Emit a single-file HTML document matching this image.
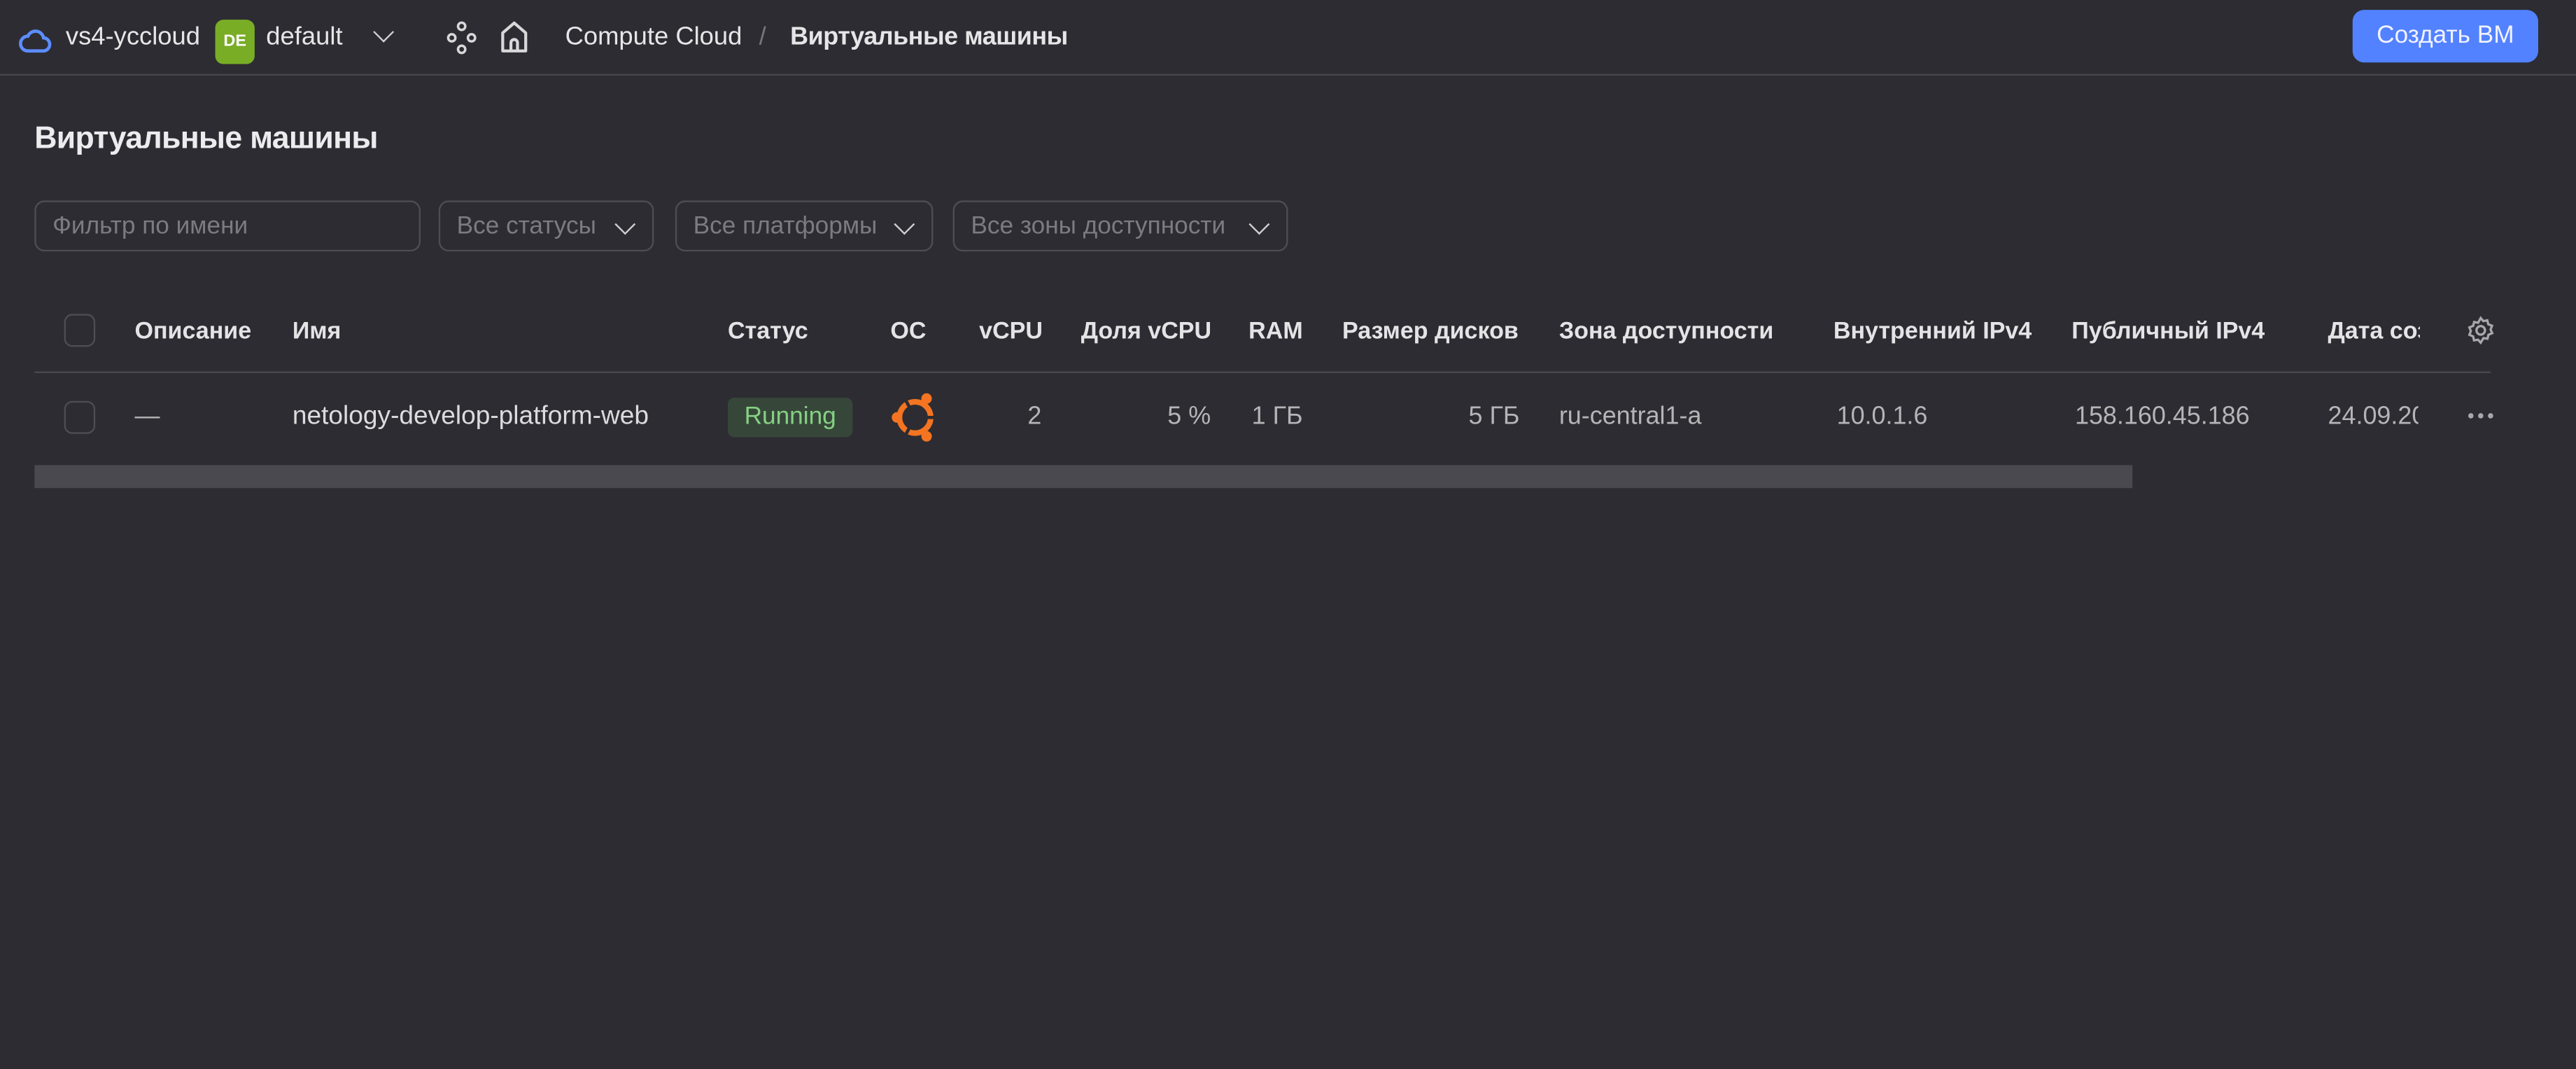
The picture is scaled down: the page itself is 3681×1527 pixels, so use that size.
<!DOCTYPE html>
<html><head><meta charset="utf-8"><style>
html,body{margin:0;padding:0;background:#2d2c32;width:3681px;height:1527px;overflow:hidden}
#w{position:absolute;left:0;top:0;width:1568px;height:650.5px;transform:scale(2.34758);transform-origin:0 0;font-family:"Liberation Sans","DejaVu Sans",sans-serif;color:#e6e6e8}
.a{position:absolute;white-space:nowrap}
.h{font-size:14.5px;font-weight:bold;color:#e4e4e6;top:194px}
.c{font-size:15.3px;color:#b5b5b8;top:245px}
.r{text-align:right}
.f{position:absolute;top:122px;height:31px;border:1px solid #4e4d54;border-radius:6px;box-sizing:border-box;font-size:15px;color:#7c7b82;line-height:30px;padding-left:10px}
.chev{position:absolute;top:9px;width:8px;height:8px;border-right:1.6px solid #d0d0d2;border-bottom:1.6px solid #d0d0d2;transform:rotate(45deg)}
.cb{position:absolute;width:19px;height:20px;border:1.5px solid #4e4d54;border-radius:5px;box-sizing:border-box}
</style></head><body><div id="w">
<svg class="a" style="left:11px;top:14px" width="21" height="20" viewBox="0 0 21 20"><path d="M6 17h9a4 4 0 0 0 .5-8 5 5 0 0 0-9.5-1 4.5 4.5 0 0 0 0 9z" fill="none" stroke="#5c8dff" stroke-width="2"/></svg>
<div class="a" style="left:40px;top:14px;font-size:15.5px">vs4-yccloud</div>
<div class="a" style="left:131px;top:12px;width:24px;height:27px;background:#79ad26;border-radius:5px;font-size:10px;font-weight:bold;color:#fff;text-align:center;line-height:27px">DE</div>
<div class="a" style="left:162px;top:14px;font-size:15.5px">default</div>
<div class="chev" style="left:229px;top:15px"></div>
<svg class="a" style="left:270px;top:12px" width="22" height="22" viewBox="0 0 22 22" fill="none" stroke="#d8d8da" stroke-width="1.5"><circle cx="11" cy="4" r="2.2"/><circle cx="5" cy="11" r="2.2"/><circle cx="17" cy="11" r="2.2"/><circle cx="11" cy="18" r="2.2"/></svg>
<svg class="a" style="left:303px;top:11px" width="20" height="22" viewBox="0 0 20 22" fill="none" stroke="#d8d8da" stroke-width="1.8"><path d="M3 20V9l7-6 7 6v11z" stroke-linejoin="round"/><path d="M8 20v-5a2 2 0 0 1 4 0v5"/></svg>
<div class="a" style="left:344px;top:14px;font-size:15.5px">Compute Cloud</div>
<div class="a" style="left:462px;top:14px;font-size:15.5px;color:#77767c">/</div>
<div class="a" style="left:481px;top:14px;font-size:15.3px;font-weight:bold;letter-spacing:-0.2px">Виртуальные машины</div>
<div class="a" style="left:1432px;top:6px;width:113px;height:32px;background:#5282ff;border-radius:7px;color:#f2f2ff;font-size:15px;text-align:center;line-height:32px">Создать ВМ</div>
<div class="a" style="left:0;top:45px;width:1568px;height:1.3px;background:#47464c"></div>
<div class="a" style="left:21px;top:74px;font-size:19px;font-weight:bold;color:#ececee;letter-spacing:-0.3px">Виртуальные машины</div>
<div class="f" style="left:21px;width:235px">Фильтр по имени</div>
<div class="f" style="left:267px;width:131px">Все статусы<div class="chev" style="left:108px"></div></div>
<div class="f" style="left:411px;width:157px">Все платформы<div class="chev" style="left:134px"></div></div>
<div class="f" style="left:580px;width:204px">Все зоны доступности<div class="chev" style="left:181px"></div></div>
<div class="cb" style="left:39px;top:191px"></div>
<div class="a h" style="left:82px">Описание</div>
<div class="a h" style="left:178px">Имя</div>
<div class="a h" style="left:443px">Статус</div>
<div class="a h" style="left:542px">ОС</div>
<div class="a h" style="left:596px">vCPU</div>
<div class="a h" style="left:658px">Доля vCPU</div>
<div class="a h" style="left:760px">RAM</div>
<div class="a h" style="left:817px">Размер дисков</div>
<div class="a h" style="left:949px">Зона доступности</div>
<div class="a h" style="left:1116px">Внутренний IPv4</div>
<div class="a h" style="left:1261px">Публичный IPv4</div>
<div class="a h" style="left:1417px;width:56px;overflow:hidden">Дата создания</div>
<svg class="a" style="left:1501px;top:192px" width="18" height="18" viewBox="0 0 18 18" fill="none" stroke="#a8a8ac" stroke-width="1.4"><path d="M9 1.5l1.6 1.9 2.4-.5.6 2.4 2.3.9-.9 2.3 1 2.2-2.3 1-.6 2.4-2.4-.4L9 16.5l-1.6-1.8-2.5.4-.5-2.4-2.3-1 .9-2.2-.9-2.3 2.3-.9.6-2.4 2.4.5z"/><circle cx="9" cy="9" r="2.6"/></svg>
<div class="a" style="left:21px;top:225.5px;width:1495px;height:1.3px;background:#4a494f"></div>
<div class="cb" style="left:39px;top:244px"></div>
<div class="a c" style="left:82px">—</div>
<div class="a c" style="left:178px;color:#dcdcde;font-size:15.8px">netology-develop-platform-web</div>
<div class="a" style="left:443px;top:242px;width:76px;height:24px;background:#36473a;border-radius:4px;color:#86d083;font-size:15px;text-align:center;line-height:24px">Running</div>
<svg class="a" style="left:541px;top:237px" width="32" height="34" viewBox="0 0 32 34"><circle cx="16" cy="17" r="9.5" fill="none" stroke="#f47421" stroke-width="3.4"/><g stroke="#2d2c32" stroke-width="2"><line x1="16" y1="17" x2="28" y2="17"/><line x1="16" y1="17" x2="10" y2="6"/><line x1="16" y1="17" x2="10" y2="28"/></g><circle cx="5" cy="17" r="3.2" fill="#f47421"/><circle cx="23" cy="5.5" r="3.2" fill="#f47421"/><circle cx="23" cy="28.5" r="3.2" fill="#f47421"/></svg>
<div class="a c r" style="left:600px;width:34px">2</div>
<div class="a c r" style="left:690px;width:47px">5 %</div>
<div class="a c r" style="left:750px;width:43px">1 ГБ</div>
<div class="a c r" style="left:870px;width:55px">5 ГБ</div>
<div class="a c" style="left:949px">ru-central1-a</div>
<div class="a c" style="left:1118px">10.0.1.6</div>
<div class="a c" style="left:1263px">158.160.45.186</div>
<div class="a c" style="left:1417px;width:55px;overflow:hidden">24.09.2024</div>
<svg class="a" style="left:1501px;top:250px" width="18" height="6" viewBox="0 0 18 6" fill="#a8a8ac"><circle cx="3" cy="3" r="1.6"/><circle cx="9" cy="3" r="1.6"/><circle cx="15" cy="3" r="1.6"/></svg>
<div class="a" style="left:21px;top:283px;width:1277px;height:14px;background:#4a494f"></div>
</div></body></html>
